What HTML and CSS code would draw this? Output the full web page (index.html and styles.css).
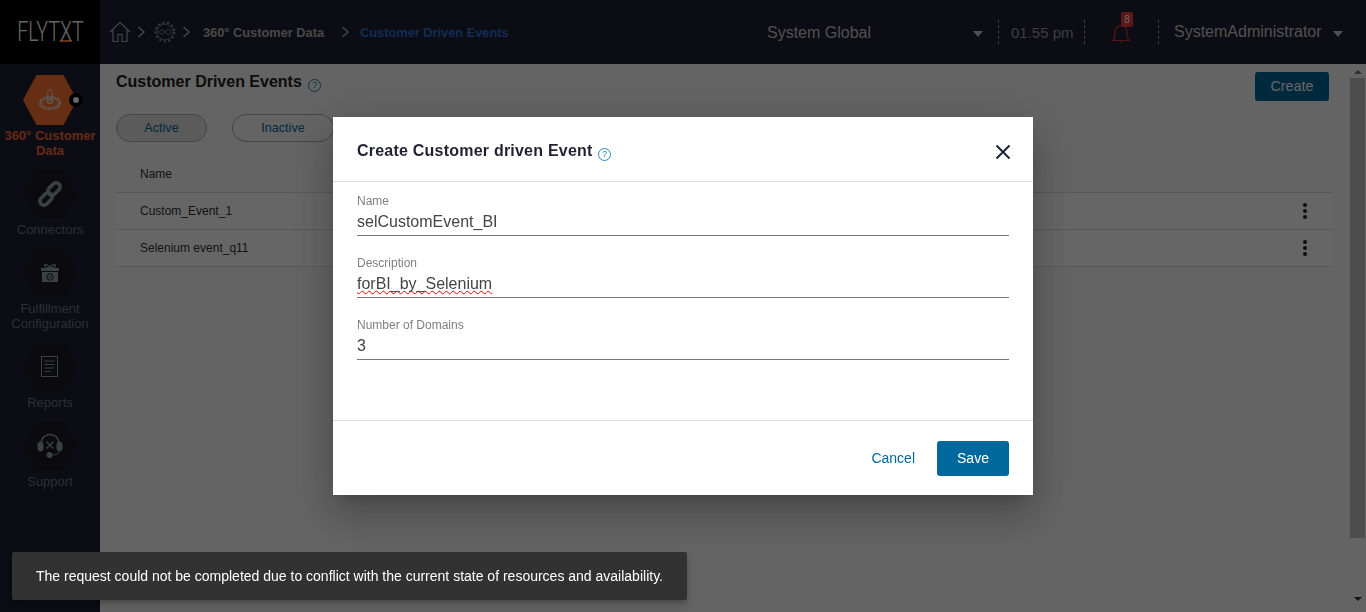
FILE: index.html
```html
<!DOCTYPE html>
<html>
<head>
    <title>Customer Driven Events</title>
    <link rel="stylesheet" href="styles.css">
</head>
<body>
    <header class="topbar">
        <div class="logo"><span class="logo-text">FLYT<span class="logo-x">X</span>T</span></div>
        <nav class="crumbs">
            <svg class="crumb-home" width="22" height="22" viewBox="0 0 22 22" fill="none" stroke="#aab" stroke-width="1.2">
                <path d="M1 11 11 1.5 21 11"/>
                <path d="M4 8.5V20.5H9V13.5H13V20.5H18V8.5"/>
            </svg>
            <svg class="crumb-chev" width="9" height="12" viewBox="0 0 9 12" fill="none" stroke="#aaa" stroke-width="1.6"><path d="M1.5 1 7 6 1.5 11"/></svg>
            <svg class="crumb-gear" width="22" height="22" viewBox="0 0 22 22" fill="none" stroke="#8a8a8a">
                <circle cx="11" cy="11" r="9.4" stroke-width="2" stroke-dasharray="2.4 2.2"/>
                <circle cx="11" cy="11" r="7.8" stroke-width=".8"/>
                <path stroke-width=".9" d="M11 11C9.5 9 8.5 8.8 7.6 8.8 6.2 8.8 5.6 10 5.6 11S6.2 13.2 7.6 13.2C8.5 13.2 9.5 13 11 11S13.5 8.8 14.4 8.8C15.8 8.8 16.4 10 16.4 11S15.8 13.2 14.4 13.2C13.5 13.2 12.5 13 11 11Z"/>
            </svg>
            <svg class="crumb-chev" width="9" height="12" viewBox="0 0 9 12" fill="none" stroke="#aaa" stroke-width="1.6"><path d="M1.5 1 7 6 1.5 11"/></svg>
            <span class="crumb-text">360° Customer Data</span>
            <svg class="crumb-chev chev-wide" width="9" height="12" viewBox="0 0 9 12" fill="none" stroke="#aaa" stroke-width="1.6"><path d="M1.5 1 7 6 1.5 11"/></svg>
            <span class="crumb-text crumb-current">Customer Driven Events</span>
        </nav>
        <div class="top-right">
            <div class="scope">System Global</div>
            <span class="caret"></span>
            <span class="dash dash-first"></span>
            <div class="clock">01.55 pm</div>
            <span class="dash"></span>
            <div class="bell">
                <svg width="22" height="22" viewBox="0 0 22 22" fill="none" stroke="#d9343a" stroke-width="1.2">
                    <path d="M3 18.5C5 16 5 14 5 11 5 6 8 3.5 11 3.5S17 6 17 11C17 14 17 16 19 18.5Z"/>
                    <path d="M10 20.5H12"/>
                </svg>
                <span class="badge">8</span>
            </div>
            <span class="dash"></span>
            <div class="user">SystemAdministrator</div>
            <span class="caret"></span>
        </div>
    </header>

    <div class="layout">
        <aside class="sidebar">
            <div class="side-item active">
                <div class="hex">
                    <svg width="24" height="24" viewBox="0 0 32 32" fill="none" stroke="#e8e8e8">
                        <path stroke-width="1.2" d="M13 15V6C13 3 14.5 2 16 2S19 3 19 6V15"/>
                        <ellipse cx="16" cy="20" rx="13" ry="7.5" stroke-width="4" stroke-dasharray="1.5 1"/>
                        <ellipse cx="16" cy="18" rx="3.5" ry="2.5" stroke-width="1.4"/>
                    </svg>
                </div>
                <span class="side-dot"></span>
                <div class="side-label">360° Customer Data</div>
            </div>
            <div class="side-item">
                <div class="hex">
                    <svg width="26" height="26" viewBox="0 0 26 26" fill="none" stroke="#8fa3a3" stroke-width="3.6">
                        <rect x="13" y="1" width="8" height="14" rx="4" transform="rotate(45 17 8)"/>
                        <rect x="5" y="11" width="8" height="14" rx="4" transform="rotate(45 9 18)"/>
                    </svg>
                </div>
                <div class="side-label">Connectors</div>
            </div>
            <div class="side-item">
                <div class="hex">
                    <svg width="20" height="20" viewBox="0 0 20 20">
                        <path fill="#8fa3a3" d="M1 5H19V8H1ZM2 9H18V19H2Z"/>
                        <path fill="none" stroke="#8fa3a3" stroke-width="1.2" d="M10 5C8 1 5 1 4.5 2.5S7 5 10 5C13 5 16 4 15.5 2.5S12 1 10 5Z"/>
                        <circle cx="10" cy="14" r="3.2" fill="none" stroke="#1b1c26"/>
                        <path fill="none" stroke="#1b1c26" d="M8.6 14 9.7 15 11.5 13"/>
                    </svg>
                </div>
                <div class="side-label">Fulfillment Configuration</div>
            </div>
            <div class="side-item">
                <div class="hex">
                    <svg width="18" height="22" viewBox="0 0 18 22" fill="none" stroke="#8fa3a3">
                        <rect x=".5" y=".5" width="16" height="20"/>
                        <path d="M3.5 5H13.5M3.5 8.5H13.5M3.5 12H13.5M3.5 15.5H9.5"/>
                    </svg>
                </div>
                <div class="side-label">Reports</div>
            </div>
            <div class="side-item">
                <div class="hex">
                    <svg width="26" height="26" viewBox="0 0 26 26" fill="none" stroke="#8fa3a3">
                        <path stroke-width="1.4" d="M4 11C4 5 8 1.5 13 1.5S22 5 22 11"/>
                        <rect x="1" y="9" width="5" height="9" rx="2.4" fill="#8fa3a3"/>
                        <rect x="20" y="9" width="5" height="9" rx="2.4" fill="#8fa3a3"/>
                        <path stroke-width="1.4" d="M9.5 8.5 16.5 15.5M16.5 8.5 9.5 15.5"/>
                        <path stroke-width="1" d="M22 18C22 20.5 19 22 15 22"/>
                        <circle cx="12.5" cy="22" r="2.6" fill="#8fa3a3"/>
                    </svg>
                </div>
                <div class="side-label">Support</div>
            </div>
        </aside>

        <main class="main">
            <div class="page-head">
                <h1 class="page-title">Customer Driven Events <span class="help">?</span></h1>
                <button class="btn-create">Create</button>
            </div>
            <div class="pills">
                <span class="pill pill-on">Active</span>
                <span class="pill">Inactive</span>
            </div>
            <div class="table-head">Name</div>
            <div class="table-row">
                <span>Custom_Event_1</span>
                <span class="dots"><i></i><i></i><i></i></span>
            </div>
            <div class="table-row">
                <span>Selenium event_q11</span>
                <span class="dots"><i></i><i></i><i></i></span>
            </div>
        </main>

        <div class="scrollbar">
            <span class="arrow-up"></span>
            <span class="thumb"></span>
            <span class="arrow-down"></span>
        </div>
    </div>

    <div class="overlay">
        <div class="modal">
            <div class="modal-head">
                <h2 class="modal-title">Create Customer driven Event <span class="help help-blue">?</span></h2>
                <svg class="modal-close" width="16" height="16" viewBox="0 0 16 16" stroke="#1f2233" stroke-width="2"><path d="M1.5 1.5 14.5 14.5M14.5 1.5 1.5 14.5"/></svg>
            </div>
            <div class="modal-body">
                <div class="field">
                    <label>Name</label>
                    <div class="field-value">selCustomEvent_BI</div>
                </div>
                <div class="field">
                    <label>Description</label>
                    <div class="field-value"><span class="typo">forBI_by_Selenium</span></div>
                </div>
                <div class="field">
                    <label>Number of Domains</label>
                    <div class="field-value">3</div>
                </div>
            </div>
            <div class="modal-foot">
                <a class="btn-cancel">Cancel</a>
                <button class="btn-save">Save</button>
            </div>
        </div>
    </div>

    <div class="toast">The request could not be completed due to conflict with the current state of resources and availability.</div>
</body>
</html>
```

FILE: styles.css
```css
* {
    box-sizing: border-box;
}
html, body {
    height: 100%;
}
body {
    margin: 0;
    font-family: "Liberation Sans", Arial, sans-serif;
    overflow: hidden;
    display: flex;
    flex-direction: column;
    background: #fafafa;
}

/* top bar */
.topbar {
    height: 64px;
    flex: none;
    display: flex;
    align-items: center;
    background: #1d1f32;
    color: #fff;
}
.logo {
    width: 100px;
    height: 64px;
    background: #000;
    display: flex;
    align-items: center;
    justify-content: center;
    font-family: Roboto, sans-serif;
    font-weight: 300;
    font-size: 28px;
    color: #fff;
}
.logo-text {
    display: inline-flex;
    align-items: flex-end;
    line-height: 20px;
    height: 20px;
    transform: scaleX(.7);
    white-space: nowrap;
}
.logo-x {
    height: 20px;
    border-bottom: 2px solid #ff7a30;
}
.crumbs {
    display: flex;
    align-items: center;
    margin-left: 9px;
    font-size: 12.8px;
    font-weight: bold;
}
.crumb-chev {
    margin: 0 8px 0 6px;
}
.chev-wide {
    margin: 0 10px 0 17px;
}
.crumb-text {
    margin-left: 4px;
    color: #b5b5b5;
}
.crumb-current {
    margin-left: 0;
    color: #2f6fd0;
}
.top-right {
    margin-left: auto;
    display: flex;
    align-items: center;
    color: #c9c9c9;
    padding-right: 23px;
}
.scope {
    width: 206px;
    padding-top: 2px;
    font-size: 16px;
}
.caret {
    width: 0;
    height: 0;
    border: 5px solid transparent;
    border-top: 6px solid #c9c9c9;
    border-bottom: none;
    margin-top: 3px;
}
.dash {
    height: 24px;
    border-left: 1px dashed #999;
}
.dash-first {
    margin-left: 15px;
}
.clock {
    width: 85px;
    padding-left: 12px;
    font-size: 15px;
    color: #9a9a9a;
}
.bell {
    position: relative;
    width: 73px;
    height: 40px;
    display: flex;
    align-items: flex-end;
    padding: 0 0 8px 25px;
}
.badge {
    position: absolute;
    left: 36px;
    top: 0;
    width: 12px;
    height: 15px;
    background: #e53b3f;
    border-radius: 2px;
    font-size: 10px;
    line-height: 15px;
    text-align: center;
    color: #fff;
}
.user {
    width: 174px;
    padding-left: 15px;
    font-size: 16px;
}

.layout {
    flex: 1;
    min-height: 0;
    display: flex;
}

/* left nav */
.sidebar {
    width: 100px;
    flex: none;
    background: #1d1f32;
    padding-top: 11px;
    display: flex;
    flex-direction: column;
    gap: 11px;
}
.side-item {
    position: relative;
    display: flex;
    flex-direction: column;
    align-items: center;
    gap: 3px;
}
.hex {
    width: 54px;
    height: 50px;
    background: #191a26;
    clip-path: polygon(25% 0, 75% 0, 100% 50%, 75% 100%, 25% 100%, 0 50%);
    display: flex;
    align-items: center;
    justify-content: center;
}
.side-label {
    font-size: 13px;
    line-height: 15px;
    text-align: center;
    color: #6c7880;
    width: 96px;
}
.active .hex {
    background: #fe7530;
}
.active .side-label {
    color: #fb6a33;
    font-weight: bold;
    font-size: 13px;
}
.side-dot {
    position: absolute;
    left: 69px;
    top: 18px;
    width: 14px;
    height: 14px;
    border-radius: 50%;
    background: #fff;
    border: 4px solid #000;
}

/* page */
.main {
    flex: 1;
    min-width: 0;
    padding: 8px 16px 0;
}
.page-head {
    display: flex;
    justify-content: space-between;
    align-items: flex-start;
}
.page-title {
    margin: 0;
    font-size: 16px;
    line-height: 20px;
    color: #222;
}
.help {
    display: inline-block;
    width: 13px;
    height: 13px;
    margin-left: 2px;
    border: 1px solid #2d7fa6;
    border-radius: 50%;
    color: #2d7fa6;
    font-size: 9px;
    font-weight: normal;
    line-height: 11px;
    text-align: center;
    vertical-align: -1px;
}
.btn-create {
    width: 74px;
    height: 29px;
    margin-right: 4px;
    padding: 0 0 2px;
    border: none;
    border-radius: 3px;
    background: #00689c;
    color: #fff;
    font: 14.4px "Liberation Sans", Arial, sans-serif;
}
.pills {
    display: flex;
    gap: 25px;
    margin-top: 13px;
}
.pill {
    width: 91px;
    height: 28px;
    border: 1px solid #aaa;
    border-radius: 14px;
    color: #00689c;
    font-size: 12.6px;
    line-height: 26px;
    text-align: center;
}
.pill + .pill {
    width: 102px;
}
.pill-on {
    background: #e4e4e4;
}
.table-head {
    height: 39px;
    margin-top: 12px;
    padding-left: 24px;
    font-size: 12px;
    line-height: 40px;
    color: #333;
    border-bottom: 1px solid #ddd;
}
.table-row {
    height: 37px;
    padding: 0 20px 0 24px;
    display: flex;
    justify-content: space-between;
    align-items: center;
    background: #fff;
    border-bottom: 1px solid #ddd;
    font-size: 12px;
    color: #333;
}
.dots {
    display: flex;
    flex-direction: column;
    gap: 2px;
    margin-right: 6px;
}
.dots i {
    width: 4px;
    height: 4px;
    border-radius: 50%;
    background: #222;
}
.scrollbar {
    width: 17px;
    flex: none;
    background: #fafafa;
    display: flex;
    flex-direction: column;
    align-items: center;
}
.arrow-up {
    margin-top: 6px;
    border: 4px solid transparent;
    border-bottom: 4px solid #777;
    border-top: none;
}
.thumb {
    width: 15px;
    height: 460px;
    margin-top: 4px;
    background: #c1c1c1;
}
.arrow-down {
    margin-top: 59px;
    border: 4px solid transparent;
    border-top: 4px solid #333;
    border-bottom: none;
}

/* modal */
.overlay {
    position: fixed;
    inset: 0;
    background: rgba(0, 0, 0, 0.6);
    display: flex;
    justify-content: center;
    align-items: flex-start;
    padding-top: 117px;
}
.modal {
    width: 700px;
    height: 378px;
    background: #fff;
    box-shadow: 0 11px 15px -7px rgba(0, 0, 0, .2), 0 24px 38px 3px rgba(0, 0, 0, .14), 0 9px 46px 8px rgba(0, 0, 0, .12);
    display: flex;
    flex-direction: column;
}
.modal-head {
    height: 65px;
    flex: none;
    padding: 5px 22px 0 24px;
    display: flex;
    justify-content: space-between;
    align-items: center;
    border-bottom: 1px solid #ddd;
}
.modal-title {
    margin: 0;
    font-size: 16px;
    letter-spacing: .22px;
    color: #1f2233;
}
.help-blue {
    margin-left: 1px;
    color: #2d8ac0;
    border-color: #2d8ac0;
    letter-spacing: 0;
}
.modal-body {
    flex: 1;
    padding: 10px 24px 0;
}
.field {
    height: 44px;
    margin-bottom: 18px;
    border-bottom: 1px solid #777;
}
.field label {
    display: block;
    font-size: 12px;
    line-height: 18px;
    color: #7f7f7f;
}
.field-value {
    margin-top: -2px;
    font-size: 16px;
    line-height: 27px;
    color: #444;
}
.typo {
    text-decoration: underline wavy #f00000 1px;
    text-decoration-skip-ink: none;
}
.modal-foot {
    height: 75px;
    flex: none;
    padding: 0 24px;
    display: flex;
    justify-content: flex-end;
    align-items: center;
    gap: 22px;
    border-top: 1px solid #ddd;
}
.btn-cancel {
    font-size: 14px;
    color: #00689c;
}
.btn-save {
    width: 72px;
    height: 35px;
    border: none;
    border-radius: 3px;
    background: #00689c;
    color: #fff;
    font: 14px "Liberation Sans", Arial, sans-serif;
}

.toast {
    position: fixed;
    left: 12px;
    bottom: 12px;
    width: 675px;
    height: 48px;
    padding-left: 24px;
    background: #323232;
    border-radius: 2px;
    box-shadow: 0 3px 5px -1px rgba(0, 0, 0, .2), 0 6px 10px rgba(0, 0, 0, .14);
    color: #fff;
    font-size: 14px;
    line-height: 48px;
    white-space: nowrap;
}
```
